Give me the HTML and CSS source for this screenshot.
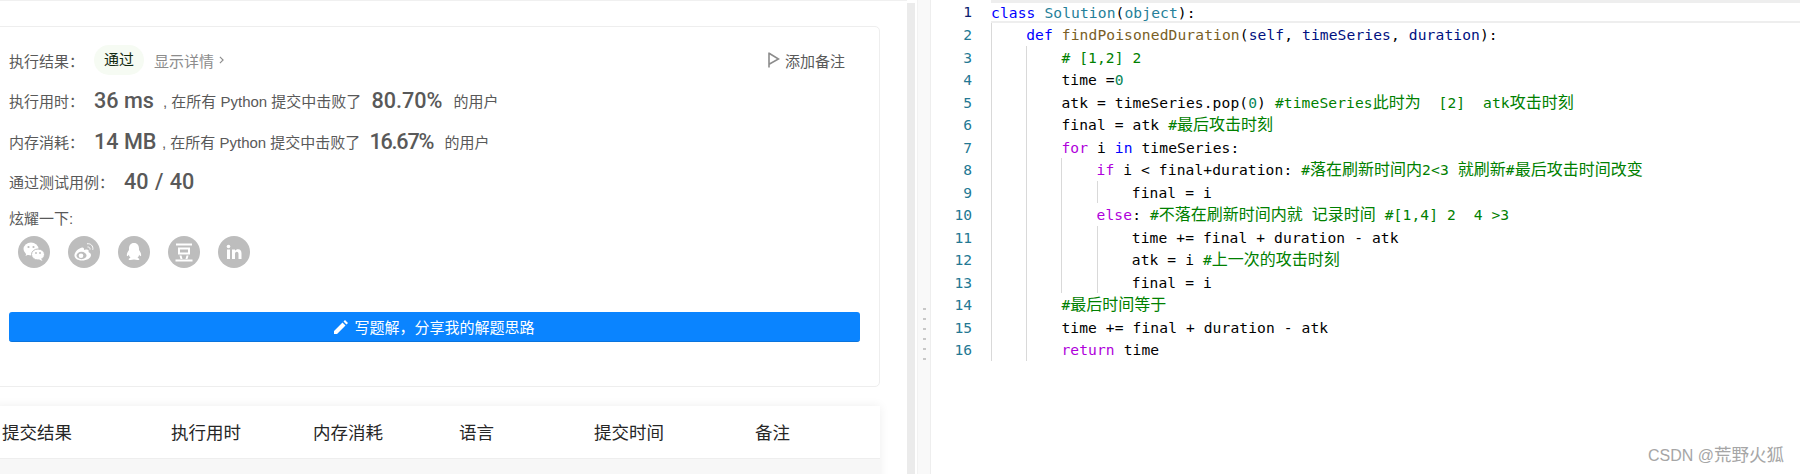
FILE: index.html
```html
<!DOCTYPE html>
<html lang="zh">
<head>
<meta charset="utf-8">
<title>提交结果</title>
<link rel="stylesheet" href="styles.css">
</head>
<body>
<main class="left">
  <section class="card">
    <div class="row r1">
      <span class="label">执行结果：</span>
      <span class="badge">通过</span>
      <span class="details">显示详情</span>
      <svg class="chev" viewBox="0 0 6 10"><path d="M1 1l4 4-4 4" fill="none" stroke="#8c8c8c" stroke-width="1.4"/></svg>
      <span class="note">
        <svg class="flag" viewBox="0 0 12 16"><path d="M1 0.5v15M1.5 1.5l9 5.5-9 5" fill="none" stroke="#8c8c8c" stroke-width="1.6"/></svg>
        添加备注
      </span>
    </div>
    <div class="row">
      <span class="label">执行用时：</span>
      <span class="num v1">36 ms</span>
      <span class="txt">, 在所有 Python 提交中击败了</span>
      <span class="num pct">80.70%</span>
      <span class="txt">的用户</span>
    </div>
    <div class="row">
      <span class="label">内存消耗：</span>
      <span class="num v1 v1-mem">14 MB</span>
      <span class="txt">, 在所有 Python 提交中击败了</span>
      <span class="num pct pct-mem">16.67%</span>
      <span class="txt">的用户</span>
    </div>
    <div class="row">
      <span class="label wide">通过测试用例：</span>
      <span class="num cases">40 / 40</span>
    </div>
    <div class="row r5"><span class="label">炫耀一下:</span></div>
    <div class="icons">
      <svg class="ico" viewBox="0 0 32 32"><circle cx="16" cy="16" r="16" fill="#bdbdbd"/><ellipse cx="13" cy="13" rx="7.5" ry="6.5" fill="#fff"/><path d="M8.5 17l-1 3 3-1.500z" fill="#fff"/><circle cx="10.500" cy="11" r="1.100" fill="#bdbdbd"/><circle cx="15.500" cy="11" r="1.100" fill="#bdbdbd"/><ellipse cx="20" cy="18.500" rx="6.500" ry="5.500" fill="#fff" stroke="#bdbdbd" stroke-width="1"/><path d="M23 22.500l1.500 2.500-3.500-1.500z" fill="#fff"/><circle cx="18" cy="17" r=".9" fill="#bdbdbd"/><circle cx="22" cy="17" r=".9" fill="#bdbdbd"/></svg>
      <svg class="ico" viewBox="0 0 32 32"><circle cx="16" cy="16" r="16" fill="#bdbdbd"/><path d="M14 11.500c-4 1-8 5-7.500 8.500.5 3 4 4.500 7.500 4.500 5 0 9-2.500 9-5.500 0-2-2-2.500-2.500-3 .5-1.500 0-3-2.500-2.500l-2 .6c.3-1.600-.4-2.900-2-2.600z" fill="#fff"/><ellipse cx="13.500" cy="19.500" rx="5" ry="3.700" fill="#bdbdbd"/><circle cx="13" cy="19.700" r="2.300" fill="#fff"/><path d="M19 7.800c3.500-.6 6.500 2 5.800 6M19.500 11c1.600-.2 2.800 1 2.500 2.600" fill="none" stroke="#fff" stroke-width="1"/></svg>
      <svg class="ico" viewBox="0 0 32 32"><circle cx="16" cy="16" r="16" fill="#bdbdbd"/><path d="M16 7c-3.500 0-5 2.700-5 5.500v1.500c-1.500 1.800-2.600 4.200-2 6 .5.500 1.300-.4 1.800-1.200.3 1.300.9 2.300 1.700 3-1 .4-2 1-1.800 1.700.3.800 3 .7 5.300.1 2.300.6 5 .7 5.300-.1.200-.7-.8-1.300-1.800-1.700.8-.7 1.400-1.700 1.700-3 .5.800 1.300 1.700 1.800 1.200.6-1.800-.5-4.200-2-6v-1.500c0-2.800-1.500-5.500-5-5.500z" fill="#fff"/></svg>
      <svg class="ico" viewBox="0 0 32 32"><circle cx="16" cy="16" r="16" fill="#bdbdbd"/><path d="M8 7.500h16v2H8zM7.500 23.500h17v2h-17zM10 11.500h12v7H10zM12 13.500v3h8v-3zM11.500 19.500h2l1 3.500h-2zM18.500 19.500h2l-1 3.500h-2z" fill="#fff" fill-rule="evenodd"/></svg>
      <svg class="ico" viewBox="0 0 32 32"><circle cx="16" cy="16" r="16" fill="#bdbdbd"/><circle cx="10.500" cy="10.500" r="1.800" fill="#fff"/><path d="M9 13.500h3V23H9zM14 13.500h3v1.300c.6-1 1.800-1.600 3-1.600 2.600 0 3.500 1.700 3.500 4.300V23h-3v-5c0-1.300-.4-2.300-1.700-2.300S17 16.700 17 18v5h-3z" fill="#fff"/></svg>
    </div>
    <button class="write" type="button">
      <svg class="pen" viewBox="0 0 14 14"><path d="M0 14v-3L8.500 2.500l3 3L3 14zM9.500 1.500L11 0l3 3-1.500 1.500z" fill="#fff"/></svg>
      写题解，分享我的解题思路
    </button>
  </section>
  <section class="table">
    <div class="thead">
      <span>提交结果</span><span>执行用时</span><span>内存消耗</span><span>语言</span><span>提交时间</span><span>备注</span>
    </div>
    <div class="tbody"></div>
  </section>
</main>
<div class="scrollbar"></div>
<div class="split">
  <i></i><i></i><i></i><i></i><i></i><i></i>
</div>
<section class="editor">
  <div class="ln-row active"><span class="ln">1</span><div class="code"><span class="t"><b class="kw">class</b> <b class="ty">Solution</b>(<b class="ty">object</b>):</span></div></div>
  <div class="ln-row"><span class="ln">2</span><div class="code"><i class="g"></i><span class="t"><b class="kw">def</b> <b class="fn">findPoisonedDuration</b>(<b class="pa">self</b>, <b class="pa">timeSeries</b>, <b class="pa">duration</b>):</span></div></div>
  <div class="ln-row"><span class="ln">3</span><div class="code"><i class="g"></i><i class="g"></i><span class="t"><b class="cm"># [1,2] 2</b></span></div></div>
  <div class="ln-row"><span class="ln">4</span><div class="code"><i class="g"></i><i class="g"></i><span class="t">time =<b class="nu">0</b></span></div></div>
  <div class="ln-row"><span class="ln">5</span><div class="code"><i class="g"></i><i class="g"></i><span class="t">atk = timeSeries.pop(<b class="nu">0</b>) <b class="cm">#timeSeries<em>此时为</em>  [2]  atk<em>攻击时刻</em></b></span></div></div>
  <div class="ln-row"><span class="ln">6</span><div class="code"><i class="g"></i><i class="g"></i><span class="t">final = atk <b class="cm">#<em>最后攻击时刻</em></b></span></div></div>
  <div class="ln-row"><span class="ln">7</span><div class="code"><i class="g"></i><i class="g"></i><span class="t"><b class="ct">for</b> i <b class="kw">in</b> timeSeries:</span></div></div>
  <div class="ln-row"><span class="ln">8</span><div class="code"><i class="g"></i><i class="g"></i><i class="g"></i><span class="t"><b class="ct">if</b> i &lt; final+duration: <b class="cm">#<em>落在刷新时间内</em>2&lt;3 <em>就刷新</em>#<em>最后攻击时间改变</em></b></span></div></div>
  <div class="ln-row"><span class="ln">9</span><div class="code"><i class="g"></i><i class="g"></i><i class="g"></i><i class="g"></i><span class="t">final = i</span></div></div>
  <div class="ln-row"><span class="ln">10</span><div class="code"><i class="g"></i><i class="g"></i><i class="g"></i><span class="t"><b class="ct">else</b>: <b class="cm">#<em>不落在刷新时间内就</em> <em>记录时间</em> #[1,4] 2  4 &gt;3</b></span></div></div>
  <div class="ln-row"><span class="ln">11</span><div class="code"><i class="g"></i><i class="g"></i><i class="g"></i><i class="g"></i><span class="t">time += final + duration - atk</span></div></div>
  <div class="ln-row"><span class="ln">12</span><div class="code"><i class="g"></i><i class="g"></i><i class="g"></i><i class="g"></i><span class="t">atk = i <b class="cm">#<em>上一次的攻击时刻</em></b></span></div></div>
  <div class="ln-row"><span class="ln">13</span><div class="code"><i class="g"></i><i class="g"></i><i class="g"></i><i class="g"></i><span class="t">final = i</span></div></div>
  <div class="ln-row"><span class="ln">14</span><div class="code"><i class="g"></i><i class="g"></i><span class="t"><b class="cm">#<em>最后时间等于</em></b></span></div></div>
  <div class="ln-row"><span class="ln">15</span><div class="code"><i class="g"></i><i class="g"></i><span class="t">time += final + duration - atk</span></div></div>
  <div class="ln-row"><span class="ln">16</span><div class="code"><i class="g"></i><i class="g"></i><span class="t"><b class="ct">return</b> time</span></div></div>
  <div class="mark">CSDN @<span class="mark-zh">荒野火狐</span></div>
</section>
</body>
</html>
```

FILE: styles.css
```css
* { box-sizing: border-box; }
html, body { margin: 0; height: 474px; overflow: hidden; }
body {
  display: flex;
  background: #fff;
  font-family: "Liberation Sans", "Noto Sans CJK SC", sans-serif;
  font-size: 15px;
  color: #595959;
}

/* left column */
.left {
  width: 907px;
  flex: none;
  height: 474px;
  padding: 25px 27px 0 0;
  border-top: 1px solid #f0f0f0;
  overflow: hidden;
}
.card {
  margin-left: -6px;
  height: 361px;
  padding: 13px 19px 0 14px;
  border: 1px solid #eee;
  border-radius: 5px;
}
.row {
  display: flex;
  align-items: center;
  height: 40.5px;
  white-space: nowrap;
}
.r5 { height: 34px; padding-bottom: 3px; }
.label { width: 85px; flex: none; color: #595959; }
.label.wide { width: 115px; }
.badge {
  width: 50px;
  height: 30px;
  line-height: 30px;
  text-align: center;
  border-radius: 15px;
  background: #f6fbf3;
  color: #12280f;
}
.details { margin-left: 10px; color: #8c8c8c; }
.chev { width: 5px; height: 8px; margin-left: 5px; }
.note {
  display: flex;
  align-items: center;
  margin-left: auto;
  padding-right: 15px;
  color: #595959;
}
.flag { width: 12px; height: 16px; margin-right: 5px; }
.num {
  font-family: "Roboto", "Liberation Sans", sans-serif;
  font-weight: 500;
  font-size: 21.6px;
  color: #595959;
}
.v1 { width: 69px; flex: none; }
.v1-mem { width: 68px; }
.pct { width: 82px; flex: none; margin-left: 10px; }
.pct-mem { width: 75px; margin-left: 9px; letter-spacing: -1.2px; }
.cases { word-spacing: 1px; }
.icons { display: flex; gap: 18px; padding-left: 9px; }
.ico { width: 32px; height: 32px; flex: none; }
.write {
  display: flex;
  align-items: center;
  justify-content: center;
  gap: 6px;
  width: 851px;
  height: 30px;
  margin-top: 44px;
  padding: 0;
  border: 0;
  border-bottom: 1px solid #0a74dd;
  border-radius: 3px;
  background: #0a84ff;
  color: #fff;
  font: inherit;
}
.pen { width: 14px; height: 14px; }

.table {
  margin: 19px 0 0 -6px;
  background: #fff;
  box-shadow: 0 0 10px rgba(0, 0, 0, .07);
  height: 100px;
}
.thead {
  display: grid;
  grid-template-columns: 169px 142px 146px 135px 161px 1fr;
  align-items: center;
  height: 53px;
  padding: 0 0 2px 8px;
  border-bottom: 1px solid #eee;
  font-size: 17.5px;
  color: #262626;
}
.tbody { height: 47px; background: #f7f7f7; }

/* scrollbar and splitter */
.scrollbar {
  width: 8px;
  flex: none;
  margin-top: 3px;
  background: #ebebeb;
}
.split {
  display: flex;
  flex-direction: column;
  align-items: center;
  gap: 8px;
  width: 14px;
  flex: none;
  margin-left: 2px;
  padding-top: 308px;
  background: #f9f9f9;
  border-left: 1px solid #f2f2f2;
  border-right: 1px solid #eee;
}
.split i { display: block; width: 3px; height: 2px; background: #c8c8c8; }

/* editor */
.editor {
  position: relative;
  flex: 1;
  min-width: 0;
  font-family: "DejaVu Sans Mono", "Noto Sans CJK SC", monospace;
  font-size: 14.6px;
  color: #000;
}
.ln-row { display: flex; height: 22.53px; }
.ln-row.active { height: 23.2px; }
.ln {
  width: 60px;
  flex: none;
  padding-right: 19px;
  text-align: right;
  line-height: 24px;
  color: #237893;
}
.active .ln { color: #0b216f; }
.code { display: flex; flex: 1; min-width: 0; }
.active .code {
  border-top: 3px solid #eee;
  border-bottom: 2px solid #eee;
}
.g {
  display: block;
  width: 35.2px;
  flex: none;
  border-left: 1px solid #d9d9d9;
}
.t { white-space: pre; line-height: 24px; letter-spacing: .11px; }
.active .t { line-height: 19px; }
.t b { font-weight: 400; }
.t em { font-style: normal; font-size: 16px; font-family: "Noto Sans CJK SC", sans-serif; line-height: 1; letter-spacing: 0; }
.kw { color: #00f; }
.ty { color: #267f99; }
.fn { color: #795e26; }
.pa { color: #001080; }
.ct { color: #af00db; }
.cm { color: #008000; }
.nu { color: #098658; }

.mark {
  position: absolute;
  right: 16px;
  bottom: 8px;
  font-family: "Liberation Sans", "Noto Sans CJK SC", sans-serif;
  font-size: 16px;
  color: #a6a6a6;
  white-space: nowrap;
}
.mark-zh { font-size: 17.5px; }
```
